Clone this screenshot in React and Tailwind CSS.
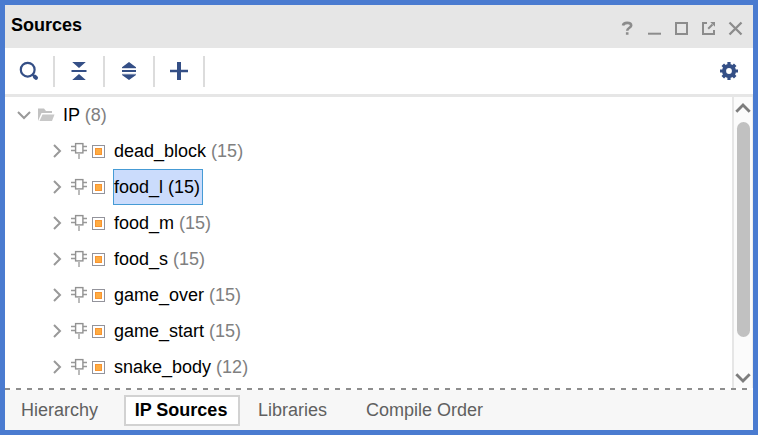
import React from "react";

const items = [
  { name: "dead_block", count: 15 },
  { name: "food_l", count: 15, selected: true },
  { name: "food_m", count: 15 },
  { name: "food_s", count: 15 },
  { name: "game_over", count: 15 },
  { name: "game_start", count: 15 },
  { name: "snake_body", count: 12 },
];

function Tool({ children }) {
  return (
    <div className="flex h-[31px] w-[50px] items-center justify-center border-r-2 border-[#dcdcdc]">
      <svg width="20" height="20" viewBox="0 0 20 20" fill="#344f86" className="block">
        {children}
      </svg>
    </div>
  );
}

function WindowIcon({ children }) {
  return (
    <svg width="15" height="15" viewBox="0 0 15 15" fill="none" stroke="#8c8c8c" strokeWidth="2" className="block">
      {children}
    </svg>
  );
}

function Chevron({ d, color = "#999999", width = 2 }) {
  return (
    <svg width="16" height="16" viewBox="0 0 16 16" fill="none" stroke={color} strokeWidth={width} className="block shrink-0">
      <path d={d} />
    </svg>
  );
}

function IpIcon() {
  return (
    <svg width="16" height="18" viewBox="0 0 16 18" fill="none" className="block shrink-0">
      <path d="M0 4.5H4M0 8.5H4M12 4.5H16M12 8.5H16" stroke="#999999" strokeWidth="1.3" />
      <path d="M8 12V17" stroke="#aaaaaa" strokeWidth="1.6" />
      <rect x="4.6" y="1.6" width="7.3" height="9.3" fill="#ffffff" stroke="#929292" strokeWidth="1.4" />
    </svg>
  );
}

function TreeRow({ name, count, selected }) {
  return (
    <div className="flex h-9 items-center pl-[44px]">
      <Chevron d="M5 2L11 8L5 14" />
      <div className="ml-[6px]">
        <IpIcon />
      </div>
      <div className="ml-[5px] flex h-[13px] w-[13px] items-center justify-center border border-[#93939b] bg-white">
        <div className="h-[7px] w-[7px] border border-[#f79432] bg-[#ffac42]" />
      </div>
      {selected ? (
        <div className="ml-2 flex h-9 w-[90px] items-center border border-[#469bd5] bg-[#cbdcfc] text-black">
          {name} ({count})
        </div>
      ) : (
        <div className="ml-[9px]">
          {name} <span className="text-[#808080]">({count})</span>
        </div>
      )}
    </div>
  );
}

export default function App() {
  return (
    <div className="flex h-[435px] w-[758px] flex-col overflow-hidden whitespace-pre border-[5px] border-[#4a7bd0] bg-white font-['Liberation_Sans',Arial,sans-serif] text-[18px] leading-5 text-black">
      <div className="flex h-[43px] shrink-0 items-center justify-between bg-[#e6e6e6] pl-[6px] pr-[10px]">
        <div className="-mt-[3px] font-bold">Sources</div>
        <div className="mt-[4px] flex gap-3">
          <WindowIcon>
            <path d="M3 4.6C3.4 2.4 5.1 1.9 7.1 1.9C9.5 1.9 11.2 2.8 11.2 4.6C11.2 6.8 7.2 6.8 7.2 9.7M7.2 11.2V13.8" strokeWidth="2.6" />
          </WindowIcon>
          <WindowIcon>
            <path d="M1 12.7H14" />
          </WindowIcon>
          <WindowIcon>
            <path d="M2 2H13V13H2Z" />
          </WindowIcon>
          <WindowIcon>
            <path d="M6 2H2V13H13V9" />
            <path d="M7.2 7.8L11.5 3.5" />
            <path d="M9.2 1H14V5.8Z" fill="#8c8c8c" stroke="none" />
          </WindowIcon>
          <WindowIcon>
            <path d="M1.5 1.5L13.5 13.5M13.5 1.5L1.5 13.5" strokeWidth="2.3" />
          </WindowIcon>
        </div>
      </div>

      <div className="flex h-[49px] shrink-0 items-center border-b-[3px] border-[#e6e6e6]">
        <Tool>
          <circle cx="8.7" cy="8.7" r="6.9" fill="none" stroke="#344f86" strokeWidth="2.2" />
          <path d="M15.8 15.7L17 16.8" stroke="#344f86" strokeWidth="4" strokeLinecap="round" />
          <path d="M13.2 13.5L15 15" stroke="#344f86" strokeWidth="2" />
        </Tool>
        <Tool>
          <path d="M3.2 1H16.8L10 7Z M2.5 9H17.5V11H2.5Z M3.2 19H16.8L10 13Z" />
        </Tool>
        <Tool>
          <path d="M3 7V6.3L10 1L17 6.3V7Z M3 9H17V11H3Z M3 13.3H17V14L10 19L3 14Z" />
          <path d="M3 7H17V7.6H3Z M3 12.7H17V13.3H3Z" fill="#a9b5cc" />
        </Tool>
        <Tool>
          <path d="M8 1H12V8.7H19V11.3H12V19H8V11.3H1V8.7H8Z" />
        </Tool>
        <svg width="20" height="20" viewBox="-10 -10 20 20" fill="#344f86" className="ml-auto mr-[14px] block">
          <path d="M-1.6 -9H1.6V9H-1.6Z M-9 -1.6V1.6H9V-1.6Z" />
          <path d="M-1.8 -8.8H1.8V8.8H-1.8Z M-8.8 -1.8V1.8H8.8V-1.8Z" transform="rotate(45)" />
          <circle r="7" />
          <circle r="2.9" fill="#ffffff" />
        </svg>
      </div>

      <div className="flex h-[291px] shrink-0">
        <div className="min-w-0 flex-1">
          <div className="flex h-9 items-center pl-[11px]">
            <Chevron d="M2 5L8 11L14 5" />
            <svg width="17" height="16" viewBox="0 0 17 16" className="ml-[6px] block shrink-0">
              <path d="M0 14V1.5H6L8 4H14V6H3.5L0 14Z" fill="#c2c2c2" />
              <path d="M4.5 7.5H16.5L14 14H1.5Z" fill="#c8c8c8" />
            </svg>
            <div className="ml-2">
              IP <span className="text-[#808080]">(8)</span>
            </div>
          </div>
          {items.map((item) => (
            <TreeRow key={item.name} {...item} />
          ))}
        </div>
        <div className="flex w-[21px] flex-col items-center border-l-2 border-r border-l-[#e6e6e6] border-r-[#ededed] bg-[#fbfbfb] pt-[3px]">
          <Chevron d="M1.3 11.7L8 5L14.7 11.7" color="#7d7d7d" width={2.8} />
          <div className="mt-[6px] h-[215px] w-[13px] rounded-full bg-[#c1c1c1]" />
          <div className="mt-[33px]">
            <Chevron d="M1.3 4.3L8 11L14.7 4.3" color="#7d7d7d" width={2.8} />
          </div>
        </div>
      </div>

      <div className="h-[2px] shrink-0 bg-[repeating-linear-gradient(90deg,#8e8e8e_0_5.5px,#ffffff_5.5px_11px)]" />
      <div className="flex h-10 shrink-0 items-center bg-[#f7f7f7] pl-4 text-[#606060]">
        <div>Hierarchy</div>
        <div className="ml-[26px] flex h-[31px] w-[116px] items-center justify-center border-2 border-[#d2d2d2] bg-white pr-[2px] font-bold text-black">
          IP Sources
        </div>
        <div className="ml-[18px]">Libraries</div>
        <div className="ml-[39px]">Compile Order</div>
      </div>
    </div>
  );
}
